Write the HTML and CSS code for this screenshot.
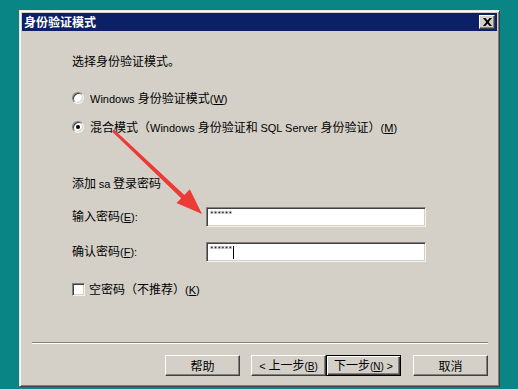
FILE: index.html
```html
<!DOCTYPE html>
<html lang="zh">
<head>
<meta charset="utf-8">
<title>身份验证模式</title>
<link rel="stylesheet" href="styles.css">
</head>
<body>
<div class="dialog">
  <div class="titlebar">
    <span class="title">身份验证模式</span>
    <span class="close"><svg width="9" height="8" viewBox="0 0 9 8"><path d="M0 0h2.4l2.1 2.6L6.6 0H9L5.7 4 9 8H6.6L4.5 5.4 2.4 8H0l3.3-4z" fill="#000"/></svg></span>
  </div>
  <div class="body">
    <div class="row r1"><span>选择身份验证模式。</span></div>
    <div class="row r2"><span class="radio"></span><span><span class="lat">Windows </span>身份验证模式<span class="lat">(<u>W</u>)</span></span></div>
    <div class="row r3"><span class="radio on"></span><span>混合模式（<span class="lat">Windows </span>身份验证和 <span class="lat">SQL Server </span>身份验证）<span class="lat">(<u>M</u>)</span></span></div>
    <div class="row r4"><span>添加 <span class="lat">sa</span> 登录密码</span></div>
    <div class="row r5 field"><span>输入密码<span class="lat">(<u>E</u>):</span></span><span class="input"><span class="pw">******</span></span></div>
    <div class="row r6 field"><span>确认密码<span class="lat">(<u>F</u>):</span></span><span class="input"><span class="pw">******</span><span class="caret"></span></span></div>
    <div class="row r7"><span class="check"></span><span>空密码（不推荐）<span class="lat">(<u>K</u>)</span></span></div>
    <div class="sep"></div>
    <div class="buttons">
      <span class="btn"><span>帮助</span></span>
      <span class="btn back"><span><span class="lat">&lt;</span> 上一步<span class="acc">(<u>B</u>)</span></span></span>
      <span class="btn default"><span>下一步<span class="acc">(<u>N</u>)</span> <span class="lat">&gt;</span></span></span>
      <span class="btn cancel"><span>取消</span></span>
    </div>
  </div>
  <svg class="arrow" width="518" height="389" viewBox="0 0 518 389">
    <polygon points="112,131.5 114,129.5 184.3,195 189.8,189.3 202,214 176.5,203 181.2,198.3" fill="#ec3a36"/>
  </svg>
</div>
</body>
</html>
```

FILE: styles.css
```css
html, body {
  margin: 0;
  padding: 0;
}
body {
  background: #0a8585;
  width: 518px;
  height: 389px;
  overflow: hidden;
  font-family: "Noto Sans CJK SC", sans-serif;
  font-size: 12px;
  color: #000;
}
.dialog {
  box-sizing: border-box;
  margin: 10px 0 0 19px;
  width: 481px;
  height: 377px;
  background: #d4d0c8;
  border-top: 1px solid #e8e6e0;
  border-left: 1px solid #e8e6e0;
  border-right: 1px solid #404040;
  border-bottom: 1px solid #404040;
  box-shadow: inset 1px 1px 0 #ffffff, inset -1px -1px 0 #808080;
  padding: 2px 2px 2px 2px;
  display: flex;
  flex-direction: column;
}
.titlebar {
  height: 18px;
  background: #0c2068;
  display: flex;
  align-items: center;
  justify-content: space-between;
  padding: 0 2px 0 2px;
}
.title {
  color: #fff;
  font-weight: bold;
  font-size: 12px;
  line-height: 18px;
}
.close {
  width: 16px;
  height: 14px;
  box-sizing: border-box;
  background: #d4d0c8;
  border-top: 1px solid #fff;
  border-left: 1px solid #fff;
  border-right: 1px solid #404040;
  border-bottom: 1px solid #404040;
  box-shadow: inset -1px -1px 0 #808080;
  display: flex;
  align-items: center;
  justify-content: center;
}
.body {
  flex: 1;
  display: flex;
  flex-direction: column;
  padding-left: 50px;
}
.lat {
  font-family: "Liberation Sans", sans-serif;
  font-size: 11px;
}
u {
  text-decoration-thickness: 1px;
  text-underline-offset: 1px;
}
.row {
  height: 20px;
  line-height: 20px;
  display: flex;
  align-items: center;
  white-space: nowrap;
}
.r1 { margin-top: 20px; }
.r2 { margin-top: 17px; }
.r3 { margin-top: 9px; }
.r4 { margin-top: 36px; }
.r5 { margin-top: 13px; }
.r6 { margin-top: 15px; }
.r7 { margin-top: 18px; }
.field {
  display: grid;
  grid-template-columns: 134px 220px;
  align-items: center;
}
.input {
  position: relative;
  box-sizing: border-box;
  height: 20px;
  background: #fff;
  border-top: 1px solid #808080;
  border-left: 1px solid #808080;
  border-right: 1px solid #f4f2ee;
  border-bottom: 1px solid #f4f2ee;
  box-shadow: inset 1px 1px 0 #404040, inset -1px -1px 0 #d4d0c8;
  display: flex;
  align-items: flex-start;
  padding: 2px 0 0 3px;
}
.pw {
  font-family: "DejaVu Sans", sans-serif;
  font-size: 7px;
  line-height: 8px;
  letter-spacing: 0.2px;
}
.caret {
  width: 1px;
  height: 13px;
  background: #000;
  margin-left: 1px;
  margin-top: 1px;
}
.radio {
  width: 12px;
  height: 12px;
  box-sizing: border-box;
  border-radius: 50%;
  background: #fff;
  border: 1px solid;
  border-color: #808080 #f4f2ee #f4f2ee #808080;
  box-shadow: inset 1px 1px 0 #404040, inset -1px -1px 0 #d4d0c8;
  margin-right: 6px;
  display: flex;
  align-items: center;
  justify-content: center;
}
.radio.on::after {
  content: "";
  width: 4px;
  height: 4px;
  border-radius: 50%;
  background: #000;
}
.check {
  width: 13px;
  height: 13px;
  box-sizing: border-box;
  background: #fff;
  border-top: 1px solid #808080;
  border-left: 1px solid #808080;
  border-right: 1px solid #f4f2ee;
  border-bottom: 1px solid #f4f2ee;
  box-shadow: inset 1px 1px 0 #404040, inset -1px -1px 0 #d4d0c8;
  margin-right: 4px;
}
.sep {
  margin: 43px 9px 0 -40px;
  height: 1px;
  background: #808080;
  border-bottom: 1px solid #fff;
}
.buttons {
  margin: 11px 9px 0 0;
  display: flex;
  justify-content: flex-end;
}
.btn {
  box-sizing: border-box;
  width: 75px;
  height: 21px;
  background: #d4d0c8;
  border-top: 1px solid #fff;
  border-left: 1px solid #fff;
  border-right: 1px solid #404040;
  border-bottom: 1px solid #404040;
  box-shadow: inset -1px -1px 0 #808080;
  display: flex;
  align-items: center;
  justify-content: center;
  font-size: 12px;
  line-height: 19px;
  white-space: nowrap;
}
.btn .acc {
  font-family: "Liberation Sans", sans-serif;
  font-size: 10px;
}
.back { margin-left: 11px; }
.default {
  border: 1px solid #000;
  box-shadow: inset 1px 1px 0 #fff, inset -1px -1px 0 #404040, inset -2px -2px 0 #808080;
}
.cancel { margin-left: 12px; }
.arrow {
  position: absolute;
  left: 0;
  top: 0;
  pointer-events: none;
}
```
